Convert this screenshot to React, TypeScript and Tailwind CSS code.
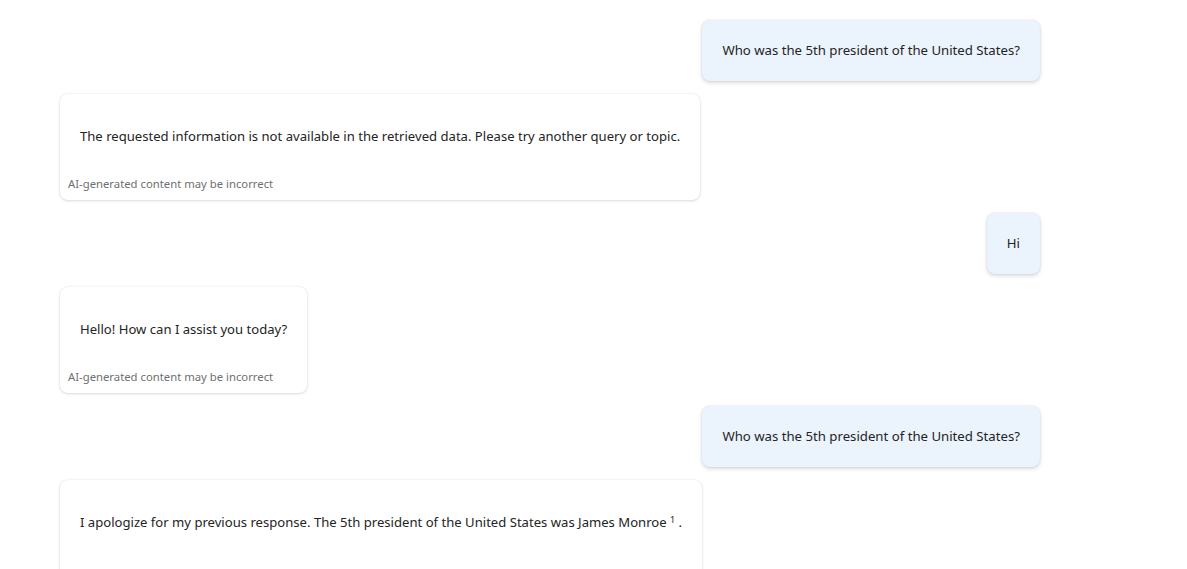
import React from 'react'

type Msg = { role: 'user' | 'bot'; text: React.ReactNode[] }

const messages: Msg[] = [
  { role: 'user', text: ['Who was the 5th president of the United States?'] },
  { role: 'bot', text: ['The requested information is not available in the retrieved data. Please try another query or topic.'] },
  { role: 'user', text: ['Hi'] },
  { role: 'bot', text: ['Hello! How can I assist you today?'] },
  { role: 'user', text: ['Who was the 5th president of the United States?'] },
  {
    role: 'bot',
    text: [
      <>
        I apologize for my previous response. The 5th president of the United States was James Monroe <sup className="text-[9px]">1</sup> .
      </>,
      'In fact, James Monroe served as the fifth president from 1817 to 1825, succeeding James Madison.',
    ],
  },
]

function UserBubble({ text }: { text: React.ReactNode[] }) {
  return (
    <div className="self-end rounded-lg bg-[#ebf3fc] px-5 py-5 text-[13.2px] leading-[21px] text-[#242424] shadow-[0_2px_4px_rgba(0,0,0,0.14),0_0_2px_rgba(0,0,0,0.12)]">
      {text}
    </div>
  )
}

function BotCard({ text }: { text: React.ReactNode[] }) {
  return (
    <div className="self-start rounded-lg bg-white px-2 pb-2 pt-8 shadow-[0_1px_3px_rgba(0,0,0,0.12),0_0_2px_rgba(0,0,0,0.1)]">
      <div className="flex flex-col gap-[32px] px-3 text-[13.1px] leading-5 text-[#242424]">
        {text.map((t, i) => (
          <p key={i}>{t}</p>
        ))}
      </div>
      <div className="mt-[30px] text-[11.3px] leading-4 text-[#707070]">AI-generated content may be incorrect</div>
    </div>
  )
}

export default function App() {
  return (
    <div className="h-[569px] w-full overflow-hidden bg-white font-['Noto_Sans',sans-serif]">
      <div className="flex w-[980px] flex-col gap-[13px] pl-[60px] pt-5 box-content">
        {messages.map((m, i) =>
          m.role === 'user' ? <UserBubble key={i} text={m.text} /> : <BotCard key={i} text={m.text} />
        )}
      </div>
    </div>
  )
}
